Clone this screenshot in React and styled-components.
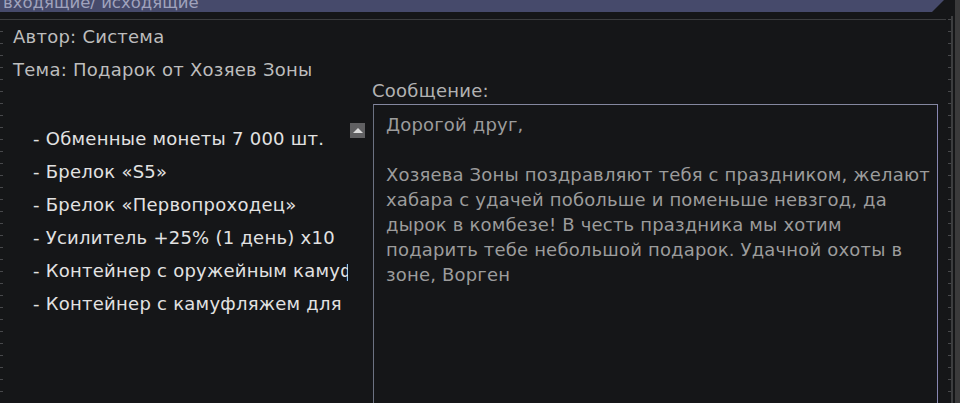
import React from "react";
import styled, { createGlobalStyle } from "styled-components";

const GlobalStyle = createGlobalStyle`
  html, body {
    margin: 0;
    padding: 0;
    background: #151618;
  }
  body {
    font-family: "DejaVu Sans", Verdana, sans-serif;
    letter-spacing: 0.25px;
  }
`;

const Screen = styled.div`
  display: flex;
  width: 960px;
  height: 403px;
  overflow: hidden;
  background: #151618;
`;

const Main = styled.div`
  display: flex;
  flex-direction: column;
  width: 955px;
`;

const EdgeStrip = styled.div`
  width: 5px;
  background: #3a3a3b;
`;

const TopBar = styled.div`
  height: 12px;
  width: 944px;
  overflow: hidden;
  background: #464a6b;
  clip-path: polygon(0 0, 944px 0, 932px 12px, 0 12px);
`;

const TabTitle = styled.div`
  padding-left: 3px;
  font-size: 16.5px;
  line-height: 6px;
  letter-spacing: 0;
  color: #a0a3bd;
  white-space: nowrap;
`;

const Frame = styled.div`
  display: flex;
  flex: 1;
  min-height: 0;
`;

const Inner = styled.div`
  display: flex;
  flex-direction: column;
  flex: 1;
  min-width: 0;
`;

const Divider = styled.div`
  height: 1px;
  margin-top: 7px;
  background: #3c3d3f;
`;

const Body = styled.div`
  display: flex;
  flex: 1;
  min-height: 0;
`;

const LeftRail = styled.div`
  width: 4px;
  background: linear-gradient(to bottom, #47484b 1px, transparent 1px) 0 11px / 3px 12px repeat-y;
`;

const RightRail = styled.div`
  width: 9px;
  margin-top: 4px;
  background:
    linear-gradient(#3c3d3f, #3c3d3f) 5px 0 / 2px 100% no-repeat,
    linear-gradient(to bottom, #47484b 1px, transparent 1px) 2px 3px / 3px 12px repeat-y;
`;

const Content = styled.div`
  flex: 1;
  min-width: 0;
  display: flex;
  flex-direction: column;
  padding: 6px 8px 0 9px;
`;

const Meta = styled.div`
  display: flex;
  flex-direction: column;
  gap: 11px;
`;

const MetaRow = styled.div`
  font-size: 18px;
  line-height: 22px;
  color: #bdbdbd;
  white-space: nowrap;
`;

const Columns = styled.div`
  display: flex;
  flex: 1;
  min-height: 0;
`;

const GiftColumn = styled.div`
  width: 359px;
  display: flex;
  align-items: flex-start;
  padding-top: 41px;
`;

const GiftList = styled.ul`
  list-style: none;
  margin: 0;
  padding: 0 0 0 20px;
  width: 315px;
  overflow: hidden;
`;

const Gift = styled.li`
  font-size: 18px;
  line-height: 33px;
  color: #e2e2e2;
  white-space: nowrap;
`;

const ScrollUp = styled.div`
  width: 15px;
  height: 15px;
  margin: 1px 0 0 2px;
  background: #606062;
  display: flex;
  align-items: center;
  justify-content: center;

  &::before {
    content: "";
    width: 0;
    height: 0;
    border-left: 5px solid transparent;
    border-right: 5px solid transparent;
    border-bottom: 5px solid #dcdcdc;
    margin-top: -1px;
  }
`;

const MessagePane = styled.div`
  flex: 1;
  display: flex;
  flex-direction: column;
  min-width: 0;
`;

const Label = styled.div`
  font-size: 18px;
  line-height: 20px;
  color: #b2b2b2;
`;

const MessageBox = styled.div`
  flex: 1;
  margin: 3px 0 0 1px;
  padding: 7px 12px 0;
  border: 1px solid #84879f;
  border-left-color: #6c7282;
  border-right-color: #8887b2;
  border-bottom: none;
`;

const MessageLine = styled.div`
  font-size: 18px;
  line-height: 25px;
  min-height: 25px;
  letter-spacing: 0.18px;
  color: #9c9c9c;
  white-space: nowrap;
`;

const gifts = [
  "- Обменные монеты 7 000 шт.",
  "- Брелок «S5»",
  "- Брелок «Первопроходец»",
  "- Усилитель +25% (1 день) x10",
  "- Контейнер с оружейным камуфляжем",
  "- Контейнер с камуфляжем для бронекостюма",
];

const message = [
  "Дорогой друг,",
  "",
  "Хозяева Зоны поздравляют тебя с праздником, желают",
  "хабара с удачей побольше и поменьше невзгод, да",
  "дырок в комбезе! В честь праздника мы хотим",
  "подарить тебе небольшой подарок. Удачной охоты в",
  "зоне, Ворген",
];

export default function App() {
  return (
    <>
      <GlobalStyle />
      <Screen>
        <Main>
          <TopBar>
            <TabTitle>входящие/ исходящие</TabTitle>
          </TopBar>
          <Frame>
            <Inner>
              <Divider />
              <Body>
                <LeftRail />
                <Content>
                  <Meta>
                    <MetaRow>Автор: Система</MetaRow>
                    <MetaRow>Тема: Подарок от Хозяев Зоны</MetaRow>
                  </Meta>
                  <Columns>
                    <GiftColumn>
                      <GiftList>
                        {gifts.map((g) => (
                          <Gift key={g}>{g}</Gift>
                        ))}
                      </GiftList>
                      <ScrollUp />
                    </GiftColumn>
                    <MessagePane>
                      <Label>Сообщение:</Label>
                      <MessageBox>
                        {message.map((line, i) => (
                          <MessageLine key={i}>{line}</MessageLine>
                        ))}
                      </MessageBox>
                    </MessagePane>
                  </Columns>
                </Content>
              </Body>
            </Inner>
            <RightRail />
          </Frame>
        </Main>
        <EdgeStrip />
      </Screen>
    </>
  );
}
